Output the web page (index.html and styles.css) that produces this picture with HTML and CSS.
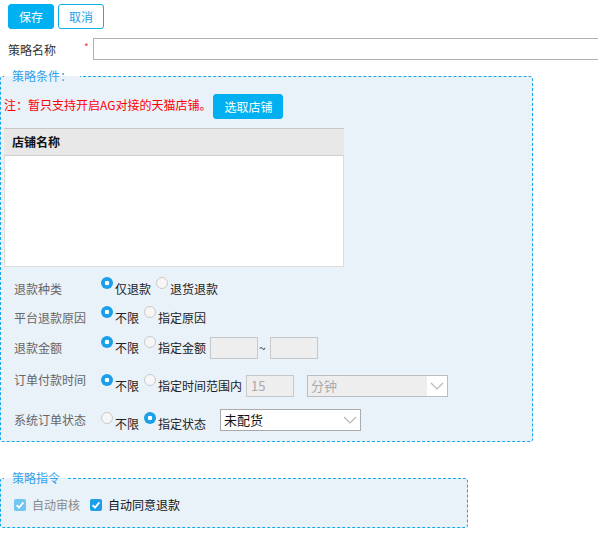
FILE: index.html
```html
<!DOCTYPE html>
<html>
<head>
<meta charset="utf-8">
<title>策略</title>
<link rel="stylesheet" href="styles.css">
</head>
<body>
<div class="toolbar">
  <button class="btn btn-primary">保存</button>
  <button class="btn btn-outline">取消</button>
</div>
<div class="name-row">
  <span class="name-label">策略名称</span>
  <span class="req">*</span>
  <input class="name-input" type="text">
</div>
<fieldset class="box box-cond">
  <legend>策略条件：</legend>
  <div class="note-row">
    <span class="note">注：暂只支持开启AG对接的天猫店铺。</span>
    <button class="btn btn-primary btn-pick">选取店铺</button>
  </div>
  <div class="shop-table">
    <div class="shop-head">店铺名称</div>
    <div class="shop-body"></div>
  </div>
  <div class="opts">
    <span class="lbl">退款种类</span>
    <div class="choices">
      <label class="opt"><span class="radio on"></span>仅退款</label>
      <label class="opt"><span class="radio"></span>退货退款</label>
    </div>

    <span class="lbl">平台退款原因</span>
    <div class="choices">
      <label class="opt"><span class="radio on"></span>不限</label>
      <label class="opt"><span class="radio"></span>指定原因</label>
    </div>

    <span class="lbl">退款金额</span>
    <div class="choices">
      <label class="opt"><span class="radio on"></span>不限</label>
      <label class="opt"><span class="radio"></span>指定金额</label>
      <input class="num" type="text" disabled>
      <span class="tilde">~</span>
      <input class="num num-2" type="text" disabled>
    </div>

    <span class="lbl lbl-up">订单付款时间</span>
    <div class="choices">
      <label class="opt"><span class="radio on"></span>不限</label>
      <label class="opt"><span class="radio"></span>指定时间范围内</label>
      <input class="num" type="text" value="15" disabled>
      <div class="sel sel-off">
        <span class="sel-text">分钟</span>
        <span class="sel-arrow"><svg width="14" height="8" viewBox="0 0 14 8"><polyline points="1,1 7,7 13,1" fill="none" stroke="#b5b5b5" stroke-width="1.1"/></svg></span>
      </div>
    </div>

    <span class="lbl">系统订单状态</span>
    <div class="choices choices-status">
      <label class="opt"><span class="radio"></span>不限</label>
      <label class="opt"><span class="radio on"></span>指定状态</label>
      <div class="sel sel-status">
        <span class="sel-text">未配货</span>
        <span class="sel-arrow"><svg width="14" height="8" viewBox="0 0 14 8"><polyline points="1,1 7,7 13,1" fill="none" stroke="#b5b5b5" stroke-width="1.1"/></svg></span>
      </div>
    </div>
  </div>
</fieldset>
<fieldset class="box box-cmd">
  <legend>策略指令</legend>
  <div class="cmds">
    <label class="chk-item chk-off"><span class="chk"><svg width="12" height="12" viewBox="0 0 12 12"><polyline points="2.6,6.2 5,8.6 9.4,3.4" fill="none" stroke="#fff" stroke-width="1.8"/></svg></span>自动审核</label>
    <label class="chk-item"><span class="chk"><svg width="12" height="12" viewBox="0 0 12 12"><polyline points="2.6,6.2 5,8.6 9.4,3.4" fill="none" stroke="#fff" stroke-width="1.8"/></svg></span>自动同意退款</label>
  </div>
</fieldset>
</body>
</html>
```

FILE: styles.css
```css
html, body {
  margin: 0;
  padding: 0;
  overflow: hidden;
}
body {
  font-family: "Noto Sans CJK SC", "Microsoft YaHei", sans-serif;
  font-size: 12px;
  line-height: 17px;
  color: #333;
  background: #fff;
  width: 598px;
  height: 542px;
}
.toolbar {
  display: flex;
  gap: 4px;
  padding: 4px 0 0 8px;
}
.btn {
  font: inherit;
  height: 25px;
  border-radius: 3px;
  padding: 0;
  line-height: 23px;
  box-sizing: border-box;
  cursor: pointer;
}
.btn-primary {
  background: #00b0f0;
  border: 1px solid #00b0f0;
  color: #fff;
  width: 46px;
}
.btn-outline {
  background: #fff;
  border: 1px solid #10aeea;
  color: #1a9fe6;
  width: 46px;
}
.name-row {
  display: flex;
  align-items: center;
  margin-top: 9px;
  height: 22px;
}
.name-label {
  width: 76px;
  padding-left: 8px;
  color: #333;
  flex: none;
}
.req {
  width: 9px;
  flex: none;
  color: #e33;
  font-size: 10px;
  align-self: flex-start;
  line-height: 14px;
  margin-top: 2px;
}
.name-input {
  flex: none;
  width: 520px;
  height: 22px;
  box-sizing: border-box;
  border: 1px solid #b0b0b0;
  margin: 0;
  padding: 0 4px;
  font: inherit;
  outline: none;
}
.box {
  margin: 0;
  border: 1px dashed #16a8ec;
  border-radius: 3px;
  background: #e9f1f9;
  padding: 0 3px 10px 3px;
  min-width: 0;
  box-sizing: border-box;
}
.box legend {
  padding: 0 8px;
  color: #2ea2ea;
  line-height: 16px;
  font-size: 12px;
}
.box-cond {
  width: 533px;
  margin-top: 8px;
}
.note-row {
  display: flex;
  align-items: center;
  height: 25px;
  margin-top: 10px;
}
.note {
  color: #f00;
  align-self: flex-start;
  margin-top: 2px;
}
.btn-pick {
  width: 70px;
  margin-left: 2px;
}
.shop-table {
  margin-top: 9px;
  width: 340px;
}
.shop-head {
  height: 28px;
  box-sizing: border-box;
  background: #e8e8e8;
  border-top: 1px solid #c8c8c8;
  border-bottom: 1px solid #cfcfcf;
  font-weight: bold;
  color: #111;
  padding-left: 8px;
  line-height: 26px;
}
.shop-body {
  height: 111px;
  box-sizing: border-box;
  background: #fff;
  border: 1px solid #dcdcdc;
  border-top: none;
}
.opts {
  display: grid;
  grid-template-columns: 87px auto;
  grid-template-rows: 29px 29px 31px 45px 23px;
  align-items: center;
  margin-top: 7px;
  margin-left: 10px;
}
.lbl {
  color: #666;
}
.lbl-up {
  align-self: start;
  margin-top: 8px;
}
.choices {
  display: flex;
  align-items: center;
}
.opt {
  display: inline-flex;
  align-items: center;
  color: #222;
}
.opt + .opt {
  margin-left: 5px;
}
.choices-status .opt {
  margin-top: 8px;
}
.radio {
  width: 12px;
  height: 12px;
  box-sizing: border-box;
  border-radius: 50%;
  margin-right: 2px;
  margin-bottom: 11px;
  border: 1px solid #cacaca;
  background: #f6f6f6;
  flex: none;
}
.radio.on {
  border: none;
  background: radial-gradient(circle, #fff 0 2px, #1a9fe8 2.6px);
}
.num {
  width: 48px;
  height: 22px;
  box-sizing: border-box;
  border: 1px solid #c8c8c8;
  background: #eee;
  margin: 0 0 0 4px;
  padding: 0 4px;
  font: inherit;
  font-size: 13px;
  color: #aaa;
}
.tilde {
  margin: 0 4px 0 1px;
  color: #333;
}
.choices .num-2 {
  margin-left: 0;
}
.sel {
  display: flex;
  align-items: center;
  width: 141px;
  height: 22px;
  box-sizing: border-box;
  border: 1px solid #aaa;
  background: #fff;
  margin-left: 13px;
}
.sel-status {
  margin-left: 14px;
}
.sel-text {
  flex: 1;
  padding-left: 3px;
  color: #111;
  font-size: 13px;
}
.sel-arrow {
  width: 20px;
  height: 20px;
  display: flex;
  align-items: center;
  justify-content: center;
  background: #fff;
}
.sel-off {
  background: #eee;
  border-color: #bdbdbd;
}
.sel-off .sel-text {
  color: #aaa;
}
.box-cmd {
  width: 468px;
  margin-top: 28px;
  padding: 10px 3px 14px 3px;
}
.cmds {
  display: flex;
  align-items: center;
  margin-left: 10px;
}
.chk-item {
  display: inline-flex;
  align-items: center;
  color: #111;
}
.chk-item + .chk-item {
  margin-left: 10px;
}
.chk {
  width: 12px;
  height: 12px;
  border-radius: 2px;
  background: #1a9fe8;
  margin-right: 6px;
  display: flex;
}
.chk-off {
  color: #888;
}
.chk-off .chk {
  background: #6fc6f0;
}
```
